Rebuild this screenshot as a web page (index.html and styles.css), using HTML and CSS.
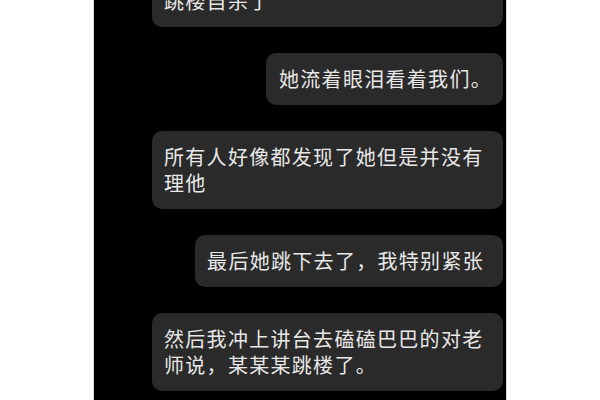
FILE: index.html
```html
<!DOCTYPE html>
<html lang="zh-CN">
<head>
<meta charset="utf-8">
<link rel="stylesheet" href="styles.css">
</head>
<body>
<div class="screen">
  <div class="chat">
    <div class="bubble in first">我看见楼顶上有一个女生，她准备跳楼自杀了</div>
    <div class="bubble out narrow">她流着眼泪看着我们。</div>
    <div class="bubble in">所有人好像都发现了她但是并没有理他</div>
    <div class="bubble out wide">最后她跳下去了，我特别紧张</div>
    <div class="bubble in">然后我冲上讲台去磕磕巴巴的对老师说，某某某跳楼了。</div>
  </div>
</div>
</body>
</html>
```
FILE: styles.css
```css
html, body {
  margin: 0;
  padding: 0;
  background: #ffffff;
  height: 400px;
  overflow: hidden;
}

.screen {
  width: 412px;
  height: 400px;
  margin: 0 auto;
  background: #000000;
  box-shadow: 0 0 0 1px #d6d6d6;
  overflow: hidden;
}

.chat {
  display: flex;
  flex-direction: column;
  gap: 26px;
  padding: 0 3px 0 58px;
}

.bubble {
  background: #2a2a2a;
  color: #e8e8e8;
  font-family: "Noto Sans CJK SC", "Noto Sans", sans-serif;
  font-size: 20px;
  line-height: 26px;
  letter-spacing: 1.3px;
  border-radius: 10px;
  padding: 13px 12px;
  box-sizing: border-box;
}

.bubble.in {
  align-self: stretch;
  padding-right: 9px;
}

.bubble.first {
  margin-top: -51px;
}

.bubble.out {
  align-self: flex-end;
}

.bubble.out.narrow {
  padding-left: 13px;
  padding-right: 11px;
}

.bubble.out.wide {
  padding-right: 19px;
}
```
